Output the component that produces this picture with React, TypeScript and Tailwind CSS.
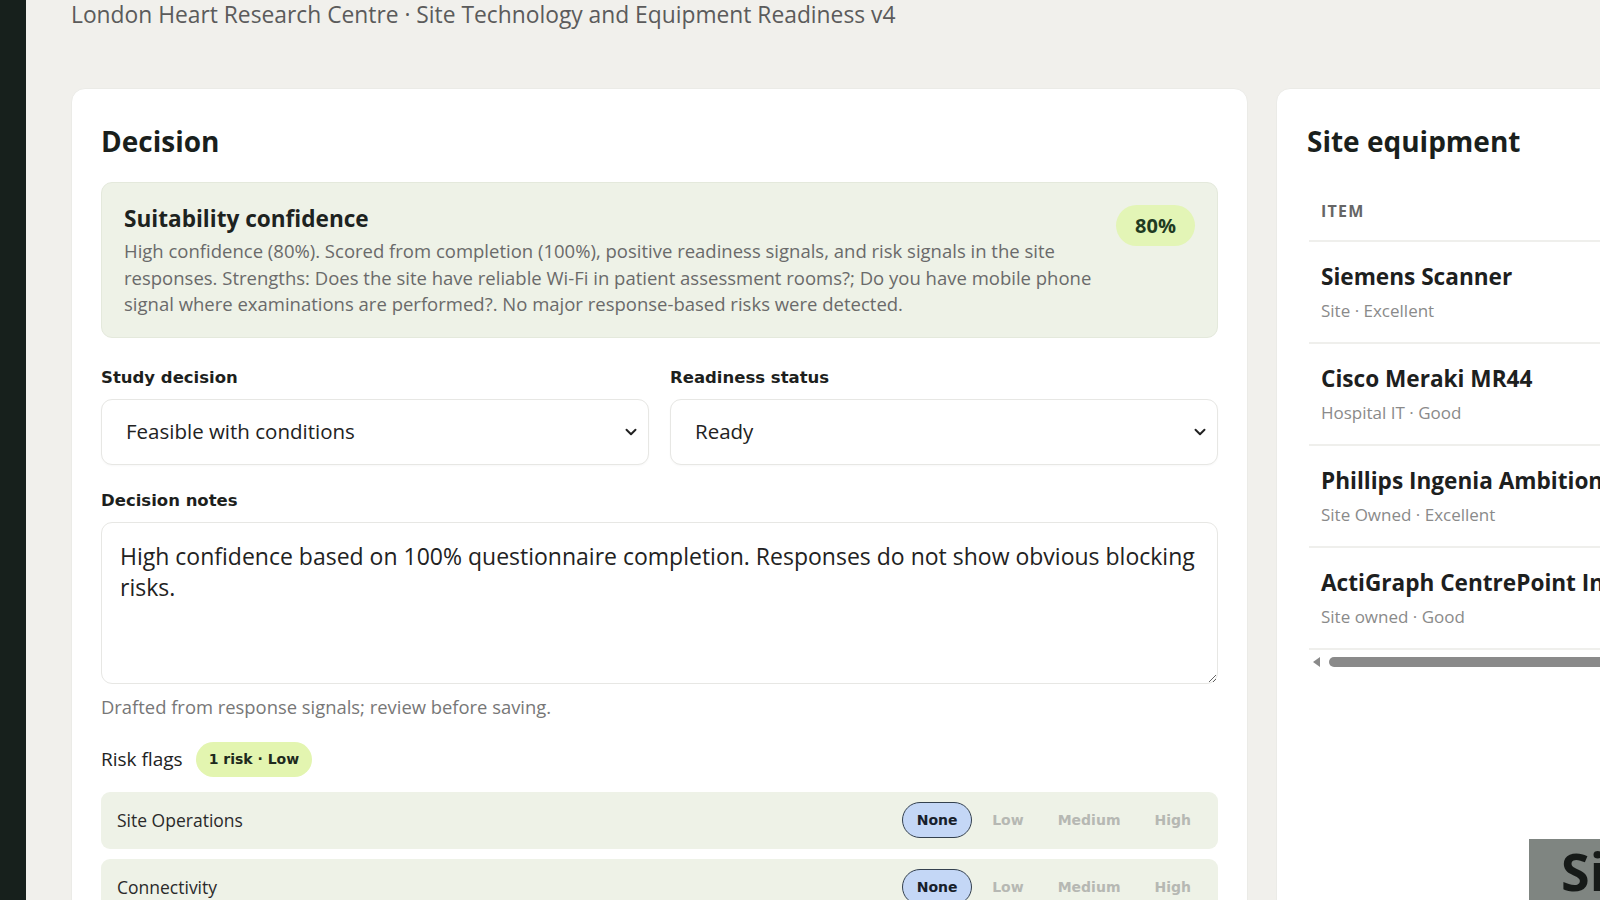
import { ChevronDown } from "lucide-react";

const equipment = [
  { name: "Siemens Scanner", meta: "Site · Excellent" },
  { name: "Cisco Meraki MR44", meta: "Hospital IT · Good" },
  { name: "Phillips Ingenia Ambition 1.5T", meta: "Site Owned · Excellent" },
  { name: "ActiGraph CentrePoint Insight Watch", meta: "Site owned · Good" },
];

const riskRows = ["Site Operations", "Connectivity"];
const levels = ["None", "Low", "Medium", "High"];

const SelectBox = ({ label, value }: { label: string; value: string }) => {
  return (
    <div className="flex-1 min-w-0">
      <p className="text-[16.5px] leading-[24px] font-bold text-[#1d1f1d] font-['DejaVu_Sans',sans-serif]">{label}</p>
      <div className="mt-[9px] h-[66px] rounded-[11px] border border-[#e7e7e4] bg-white flex items-center justify-between pl-[24px] pr-[8px] shadow-[0_1px_2px_rgba(0,0,0,0.03)]">
        <span className="text-[20.5px] text-[#222]">{value}</span>
        <ChevronDown className="w-[18px] h-[18px] text-[#222]" strokeWidth={2.6} />
      </div>
    </div>
  );
};

const App = () => {
  return (
    <div className="h-[900px] w-[1600px] overflow-hidden flex bg-[#f1f0ec] font-['Open_Sans',sans-serif]">
      <aside className="w-[26px] shrink-0 bg-[#17201c]" />

      <main className="flex-1 min-w-0 pl-[45px] relative">
        <p className="text-[22.8px] leading-[30px] text-[#5b5b5b]">
          London Heart Research Centre · Site Technology and Equipment Readiness v4
        </p>

        <div className="mt-[58px] flex gap-[28px] items-start">
          {/* Decision card */}
          <section className="w-[1177px] shrink-0 h-[830px] bg-white rounded-[14px] border border-[#ebebe7] px-[29px] pt-[34px]">
            <h2 className="text-[28px] leading-[36px] font-bold text-[#1a1f1c]">Decision</h2>

            <div className="mt-[23px] rounded-[11px] bg-[#eef2e7] border border-[#e4e9dc] pl-[22px] pr-[22px] pt-[22px] pb-[19px] flex justify-between gap-[12px]">
              <div className="flex-1 min-w-0">
                <h3 className="text-[22.6px] leading-[28px] font-bold text-[#1d231f]">Suitability confidence</h3>
                <p className="mt-[5px] text-[18.5px] leading-[26.5px] text-[#6a6a6a]">
                  High confidence (80%). Scored from completion (100%), positive readiness signals, and risk signals in the site
                  responses. Strengths: Does the site have reliable Wi-Fi in patient assessment rooms?; Do you have mobile phone
                  signal where examinations are performed?. No major response-based risks were detected.
                </p>
              </div>
              <span className="h-[41px] shrink-0 px-[19px] rounded-full bg-[#e3f5b6] text-[20px] font-bold text-[#1f3b22] flex items-center">
                80%
              </span>
            </div>

            <div className="mt-[28px] flex gap-[21px]">
              <SelectBox label="Study decision" value="Feasible with conditions" />
              <SelectBox label="Readiness status" value="Ready" />
            </div>

            <p className="mt-[24px] text-[16.5px] leading-[24px] font-bold text-[#1d1f1d] font-['DejaVu_Sans',sans-serif]">
              Decision notes
            </p>
            <textarea
              readOnly
              defaultValue="High confidence based on 100% questionnaire completion. Responses do not show obvious blocking risks."
              className="mt-[9px] block w-full h-[162px] rounded-[11px] border border-[#e7e7e4] px-[18px] pt-[18px] text-[23px] leading-[31px] text-[#222] outline-none resize-y"
            />
            <p className="mt-[11px] text-[18.4px] leading-[24px] text-[#777]">
              Drafted from response signals; review before saving.
            </p>

            <div className="mt-[23px] flex items-center gap-[13px]">
              <span className="text-[19px] text-[#222]">Risk flags</span>
              <span className="h-[35px] px-[13px] rounded-full bg-[#e3f5b0] flex items-center text-[14px] font-bold text-[#1e2a1c] font-['DejaVu_Sans',sans-serif]">
                1 risk · Low
              </span>
            </div>

            <div className="mt-[15px] flex flex-col gap-[10px]">
              {riskRows.map((row) => (
                <div
                  key={row}
                  className="h-[57px] rounded-[9px] bg-[#eef2e7] pl-[16px] pr-[13px] flex items-center justify-between"
                >
                  <span className="text-[17.5px] text-[#2a2a2a]">{row}</span>
                  <div className="flex items-center gap-[6px] font-['DejaVu_Sans',sans-serif] text-[14px] font-bold">
                    {levels.map((level) =>
                      level === "None" ? (
                        <span
                          key={level}
                          className="h-[36px] w-[70px] rounded-full bg-[#c4d7f6] border-[1.5px] border-[#34414f] text-[#17202b] flex items-center justify-center"
                        >
                          {level}
                        </span>
                      ) : (
                        <span key={level} className="px-[14px] text-[#b6b8b3]">
                          {level}
                        </span>
                      )
                    )}
                  </div>
                </div>
              ))}
            </div>
          </section>

          {/* Site equipment card */}
          <section className="w-[520px] shrink-0 h-[830px] bg-white rounded-[14px] border border-[#ebebe7] pl-[30px] pt-[34px]">
            <h2 className="text-[28px] leading-[36px] font-bold text-[#1a1f1c]">Site equipment</h2>
            <div className="mt-[23px] ml-[2px]">
              <div className="h-[60px] border-b-2 border-[#efefec] flex items-center pl-[12px] text-[16px] font-bold tracking-[0.08em] text-[#666]">
                ITEM
              </div>
              {equipment.map((item) => (
                <div key={item.name} className="border-b-2 border-[#efefec] pl-[12px] pt-[21px] pb-[19px] whitespace-nowrap">
                  <p className="text-[22.6px] leading-[28px] font-bold text-[#1d201e]">{item.name}</p>
                  <p className="mt-[8px] text-[17px] leading-[24px] text-[#8a8a8a]">{item.meta}</p>
                </div>
              ))}
              <div className="h-[24px] flex items-center pl-[4px] gap-[9px]">
                <span className="w-0 h-0 border-y-[5px] border-y-transparent border-r-[7px] border-r-[#8a8a8a]" />
                <span className="flex-1 h-[10px] rounded-full bg-[#8a8a8a]" />
              </div>
            </div>
          </section>
        </div>

        {/* floating overlay peeking in at bottom right */}
        <div className="absolute left-[1503px] top-[839px] w-[200px] h-[120px] bg-[#7f8581] pl-[32px] pt-[2px]">
          <span className="text-[52px] leading-[60px] font-bold text-[#161a18]">Si</span>
        </div>
      </main>
    </div>
  );
};

export default App;
